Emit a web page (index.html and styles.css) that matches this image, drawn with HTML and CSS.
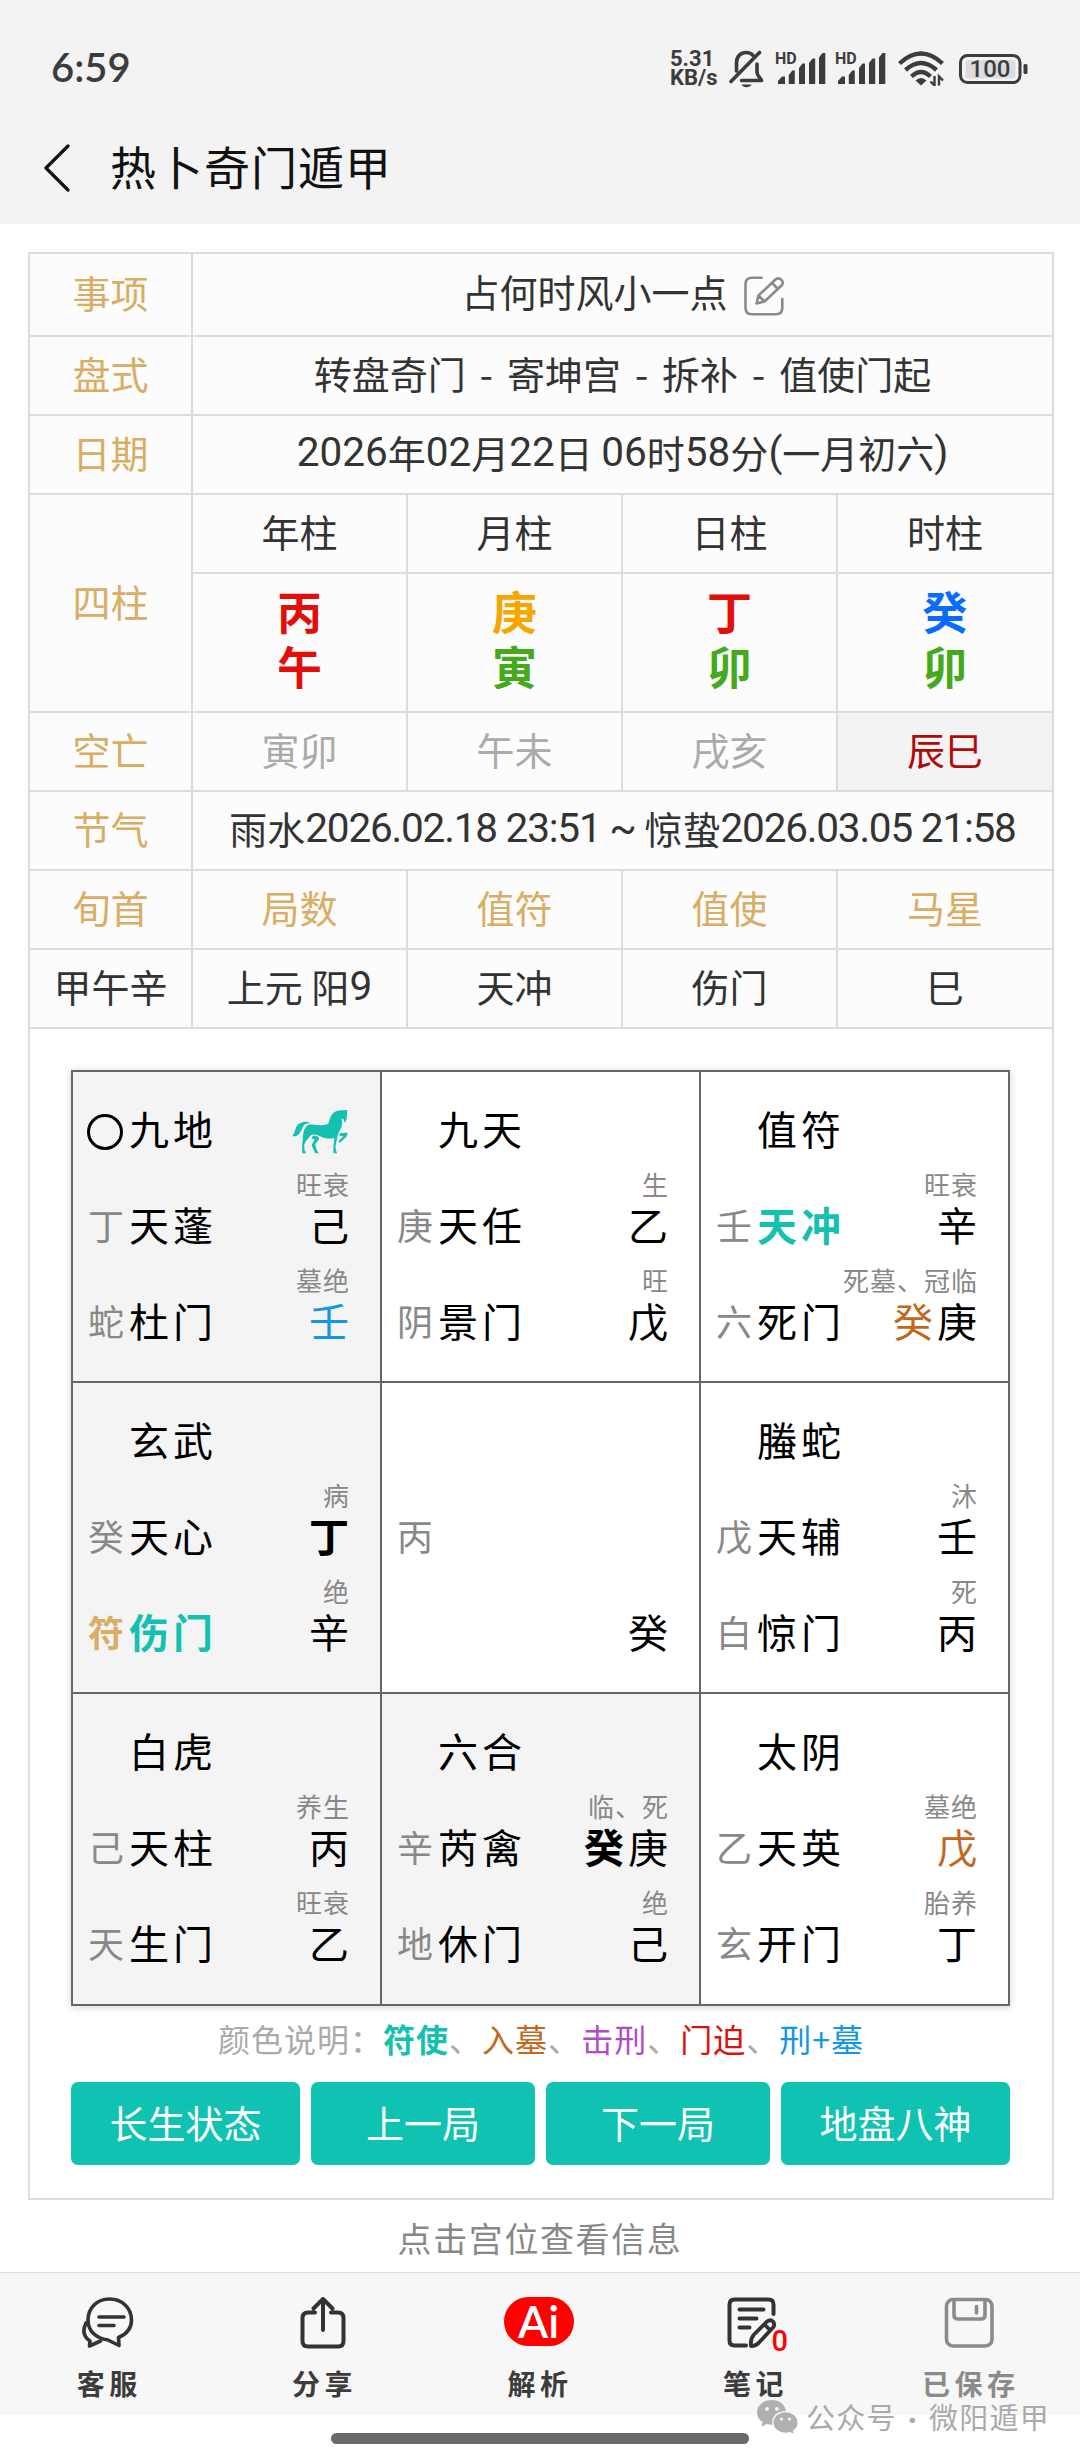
FILE: index.html
```html
<!DOCTYPE html>
<html lang="zh-CN">
<head>
    <meta charset="UTF-8">
    <meta name="viewport" content="width=device-width, initial-scale=1.0">
    <title>热卜奇门遁甲</title>
    <link rel="stylesheet" href="styles.css">
</head>
<body>
    <header class="header">
        <div class="status-bar">
            <span class="clock">6:59</span>
            <div class="status-icons">
                <div class="net-speed"><span>5.31</span><span>KB/s</span></div>
                <svg class="icon-bell" width="35" height="38" viewBox="0 0 35 38" fill="none" stroke="#3c3c3c" stroke-width="3.6" stroke-linecap="round" stroke-linejoin="round"><path d="M7.5 21V13C7.500 6 12 2.500 17 2.500c3 0 5.500 1 7 3M2 31.500L30.500 2.500M28 14v8c0 4 3 5 4.500 8.500H12.500"/><path d="M12.500 34.500h10c-1.500 3.500-8.500 3.500-10 0z" fill="#3c3c3c" stroke="none"/></svg>
                <div class="signal">
                    <span class="hd">HD</span>
                    <svg width="48" height="31" viewBox="0 0 48 31" fill="#3c3c3c"><path d="M0 31v-3l4-4.500h3V31zM10.800 31V22l3.500-4.500h2.500V31zM21 31V15l3.500-4.500h2.500V31zM31 31V10l3.500-4.500h2.700V31zM41 31V4.500L44.500 0H47.300V31z"/></svg>
                </div>
                <div class="signal">
                    <span class="hd">HD</span>
                    <svg width="48" height="31" viewBox="0 0 48 31" fill="#3c3c3c"><path d="M0 31v-3l4-4.500h3V31zM10.800 31V22l3.500-4.500h2.500V31zM21 31V15l3.500-4.500h2.500V31zM31 31V10l3.500-4.500h2.700V31zM41 31V4.500L44.500 0H47.300V31z"/></svg>
                </div>
                <svg class="icon-wifi" width="46" height="35" viewBox="0 0 46 35" fill="none" stroke="#3c3c3c" stroke-width="4.400"><path d="M1.500 12.500Q23-7.500 44.500 12.500M7.500 19Q23 5 38.500 19M13.500 25.500Q23 16.500 32.500 25.500"/><path d="M17.500 29.500q5.500-5 11 0L23 34.500z" fill="#3c3c3c" stroke="none"/><path d="M36.500 25v9.500l-4-4M41 34.500V25.500l4 4" stroke-width="2.400"/></svg>
                <svg class="icon-battery" width="70" height="30" viewBox="0 0 70 30"><rect x="1.500" y="1.500" width="59.500" height="27" rx="7" fill="none" stroke="#3c3c3c" stroke-width="3"/><rect x="6.500" y="6" width="50" height="18.500" rx="3" fill="#dcdcdc"/><rect x="64.500" y="10" width="4" height="10" rx="1.500" fill="#3c3c3c"/><text x="31" y="23.300" text-anchor="middle" class="battery-text">100</text></svg>
            </div>
        </div>
        <div class="title-bar">
            <svg class="back" width="28" height="48" viewBox="0 0 28 48" fill="none" stroke="#111" stroke-width="3.200" stroke-linecap="round" stroke-linejoin="round"><path d="M25 2L3 24l22 22"/></svg>
            <h1>热卜奇门遁甲</h1>
        </div>
    </header>

    <main class="panel">
        <div class="info">
            <div class="cell label">事项</div>
            <div class="cell wide topic">
                <span>占何时风小一点</span>
                <svg width="40" height="40" viewBox="0 0 40 40" fill="none" stroke="#8a8a8a" stroke-width="2.600" stroke-linecap="round" stroke-linejoin="round"><path d="M17.500 1.800H8Q1.500 1.800 1.500 8v24q0 6.300 6.500 6.300h24q6.300 0 6.300-6.300V23"/><path d="M12.500 27.500l2-8L31.500 3.500q3-2.500 6 .5 2.500 3 0 5.500L20.500 25.500zM28 7l6 6M15 20l5 5"/></svg>
            </div>

            <div class="cell label">盘式</div>
            <div class="cell wide mode">转盘奇门 - 寄坤宫 - 拆补 - 值使门起</div>

            <div class="cell label">日期</div>
            <div class="cell wide date"><b>2026</b>年<b>02</b>月<b>22</b>日 <b>06</b>时<b>58</b>分<b>(</b>一月初六<b>)</b></div>

            <div class="cell label pillar-label">四柱</div>
            <div class="cell">年柱</div>
            <div class="cell">月柱</div>
            <div class="cell">日柱</div>
            <div class="cell">时柱</div>
            <div class="cell pillar"><span class="fire">丙</span><span class="fire">午</span></div>
            <div class="cell pillar"><span class="metal">庚</span><span class="wood">寅</span></div>
            <div class="cell pillar"><span class="fire">丁</span><span class="wood">卯</span></div>
            <div class="cell pillar"><span class="water">癸</span><span class="wood">卯</span></div>

            <div class="cell label">空亡</div>
            <div class="cell muted">寅卯</div>
            <div class="cell muted">午未</div>
            <div class="cell muted">戌亥</div>
            <div class="cell void">辰巳</div>

            <div class="cell label">节气</div>
            <div class="cell wide term">雨水<b>2026.02.18 23:51 ~ </b>惊蛰<b>2026.03.05 21:58</b></div>

            <div class="cell label">旬首</div>
            <div class="cell label">局数</div>
            <div class="cell label">值符</div>
            <div class="cell label">值使</div>
            <div class="cell label">马星</div>

            <div class="cell">甲午辛</div>
            <div class="cell">上元 阳<b>9</b></div>
            <div class="cell">天冲</div>
            <div class="cell">伤门</div>
            <div class="cell">巳</div>
        </div>

        <div class="board">
            <section class="palace shade">
                <div class="row">
                    <span class="side"><i class="ring"></i></span><span class="name">九地</span>
                    <svg class="horse" width="56" height="45" viewBox="36 48 166 134" fill="#14c0af"><path d="M36 129C46 119 44 103 55 93C65 85 80 83 90 90C82 91 74 93 70 98C64 108 60 126 47 129Z"/><path d="M76 103C82 92 92 94 102 95C119 96 137 98 144 91C149 75 151 64 164 56C173 51 186 52 201 51C198 57 201 62 199 68C199 77 197 84 192 90C192 82 190 77 184 76C186 91 184 102 180 108C174 118 173 122 171 131L165 160L167 172L170 180H159V160L162 134C150 137 135 138 121 130C108 124 97 121 91 127C85 136 75 143 72 155L73 170L78 180H66V151C70 136 66 130 70 119C71 113 72 108 76 103Z"/><path d="M97 129C105 126 113 129 116 135C117 142 109 145 105 153L109 169L115 180H105L95 158C93 151 103 144 102 137Q98 135 93 139ZM178 120L202 119L198 130L178 149L174 143L189 129L176 128Z"/></svg>
                </div>
                <div class="row"><span class="side">丁</span><span class="name">天蓬</span><div class="stems"><small>旺衰</small><span>己</span></div></div>
                <div class="row"><span class="side">蛇</span><span class="name">杜门</span><div class="stems"><small>墓绝</small><span class="blue">壬</span></div></div>
            </section>
            <section class="palace">
                <div class="row"><span class="side"></span><span class="name">九天</span></div>
                <div class="row"><span class="side">庚</span><span class="name">天任</span><div class="stems"><small>生</small><span>乙</span></div></div>
                <div class="row"><span class="side">阴</span><span class="name">景门</span><div class="stems"><small>旺</small><span>戊</span></div></div>
            </section>
            <section class="palace">
                <div class="row"><span class="side"></span><span class="name">值符</span></div>
                <div class="row"><span class="side">壬</span><span class="name chief">天冲</span><div class="stems"><small>旺衰</small><span>辛</span></div></div>
                <div class="row"><span class="side">六</span><span class="name">死门</span><div class="stems"><small>死墓、冠临</small><span><em class="brown">癸</em>庚</span></div></div>
            </section>
            <section class="palace shade">
                <div class="row"><span class="side"></span><span class="name">玄武</span></div>
                <div class="row"><span class="side">癸</span><span class="name">天心</span><div class="stems"><small>病</small><span class="bold">丁</span></div></div>
                <div class="row"><span class="side mark">符</span><span class="name chief">伤门</span><div class="stems"><small>绝</small><span>辛</span></div></div>
            </section>
            <section class="palace">
                <div class="row"></div>
                <div class="row"><span class="side">丙</span></div>
                <div class="row"><div class="stems"><span>癸</span></div></div>
            </section>
            <section class="palace">
                <div class="row"><span class="side"></span><span class="name">螣蛇</span></div>
                <div class="row"><span class="side">戊</span><span class="name">天辅</span><div class="stems"><small>沐</small><span>壬</span></div></div>
                <div class="row"><span class="side">白</span><span class="name">惊门</span><div class="stems"><small>死</small><span>丙</span></div></div>
            </section>
            <section class="palace shade">
                <div class="row"><span class="side"></span><span class="name">白虎</span></div>
                <div class="row"><span class="side">己</span><span class="name">天柱</span><div class="stems"><small>养生</small><span>丙</span></div></div>
                <div class="row"><span class="side">天</span><span class="name">生门</span><div class="stems"><small>旺衰</small><span>乙</span></div></div>
            </section>
            <section class="palace shade">
                <div class="row"><span class="side"></span><span class="name">六合</span></div>
                <div class="row"><span class="side">辛</span><span class="name">芮禽</span><div class="stems"><small>临、死</small><span><em class="bold">癸</em>庚</span></div></div>
                <div class="row"><span class="side">地</span><span class="name">休门</span><div class="stems"><small>绝</small><span>己</span></div></div>
            </section>
            <section class="palace">
                <div class="row"><span class="side"></span><span class="name">太阴</span></div>
                <div class="row"><span class="side">乙</span><span class="name">天英</span><div class="stems"><small>墓绝</small><span class="brown">戊</span></div></div>
                <div class="row"><span class="side">玄</span><span class="name">开门</span><div class="stems"><small>胎养</small><span>丁</span></div></div>
            </section>
        </div>

        <p class="legend">颜色说明：<span class="chief">符使</span>、<span class="brown">入墓</span>、<span class="purple">击刑</span>、<span class="red">门迫</span>、<span class="blue">刑+墓</span></p>

        <div class="actions">
            <button class="btn">长生状态</button>
            <button class="btn">上一局</button>
            <button class="btn">下一局</button>
            <button class="btn">地盘八神</button>
        </div>
    </main>

    <p class="hint">点击宫位查看信息</p>

    <nav class="tabbar">
        <a class="tab">
            <svg width="52" height="52" viewBox="0 0 52 52" fill="none" stroke="#333" stroke-width="3.600" stroke-linecap="round" stroke-linejoin="round"><path d="M27.500 2C15 2 6 11 6 23c0 11 8 18.500 20 20l11 5.500-.5-8C45 37 49.500 31 49.500 23 49.500 11 40 2 27.500 2z"/><path d="M4 26c-4 8-2 14 4 18l-.5 5 11-5M17 20h25M17 28.500h15"/></svg>
            <span>客服</span>
        </a>
        <a class="tab">
            <svg width="46" height="52" viewBox="0 0 46 52" fill="none" stroke="#333" stroke-width="4" stroke-linecap="round" stroke-linejoin="round"><path d="M15 15.500H8q-5.500 0-5.500 5.500v23q0 5.500 5.500 5.500h30q5.500 0 5.500-5.500V21q0-5.500-5.500-5.500h-7M23 33V3M13.500 11.500L23 2l9.500 9.500"/></svg>
            <span>分享</span>
        </a>
        <a class="tab">
            <div class="ai">Ai</div>
            <span>解析</span>
        </a>
        <a class="tab">
            <div class="note">
                <svg width="50" height="52" viewBox="0 0 50 52" fill="none" stroke="#333" stroke-width="4" stroke-linecap="round" stroke-linejoin="round"><path d="M46.500 17V7.500q0-5-5-5h-34q-5 0-5 5v36q0 5 5 5H19M12.500 12.500h24M12.500 21.500h17M12.500 30.500h10"/><path d="M24 49q-1-7 3-11.500l13-13q3.500-2.500 6 0 2.500 3 0 6L33 44.500Q29.500 49 24 49zM38 28l5 5" stroke-width="3.800"/></svg>
                <b class="badge">0</b>
            </div>
            <span>笔记</span>
        </a>
        <a class="tab saved">
            <svg width="50" height="52" viewBox="0 0 50 52" fill="none" stroke="#8b8b8b" stroke-width="3.600" stroke-linecap="round" stroke-linejoin="round"><rect x="2.500" y="2.500" width="45.500" height="46.500" rx="6.500"/><path d="M10 3v15q0 4 4 4h23q4 0 4-4V3M32.500 9.500v6.500"/></svg>
            <span>已保存</span>
        </a>
    </nav>
    <div class="home-indicator"></div>

    <div class="watermark">
        <svg width="41" height="34" viewBox="0 0 41 34" fill="#b0b0b0"><path d="M15 0C6.500 0 0 5.500 0 12.500c0 4 2 7.300 5.500 9.500L4.500 26.500l5-2.500q2.500.8 6 .8C14 16.500 20 11 29 11 28 4.500 22.500 0 15 0z"/><ellipse cx="28.500" cy="22.500" rx="12" ry="10.200"/><path d="M31 31l5.500 2.500-1-4z"/><g fill="#f7f7f7"><circle cx="10" cy="8.800" r="1.900"/><circle cx="19.800" cy="8.800" r="1.900"/><circle cx="24.500" cy="19" r="1.600"/><circle cx="32.500" cy="19" r="1.600"/></g></svg>
        <span>公众号<b> · </b>微阳遁甲</span>
    </div>
</body>
</html>
```
FILE: styles.css
```css
* {
    box-sizing: border-box;
}
body {
    margin: 0;
    min-height: 2460px;
    position: relative;
    background-color: #fff;
    color: #333;
    font-family: "Noto Sans CJK SC", "Liberation Sans", sans-serif;
}
h1, p {
    margin: 0;
    font-weight: normal;
}
small, em, i {
    font-style: normal;
}

/* 顶部 */
.header {
    height: 224px;
    background-color: #f3f3f3;
}
.status-bar {
    display: flex;
    justify-content: space-between;
    align-items: center;
    height: 112px;
    padding: 25px 51px 0 51px;
    color: #3c3c3c;
}
.clock {
    margin-top: -4px;
    font-family: Lato, sans-serif;
    font-size: 40px;
    font-weight: 600;
}
.status-icons {
    display: flex;
    align-items: center;
}
.net-speed {
    display: flex;
    flex-direction: column;
    width: 59px;
    margin-top: -1px;
    font-family: Roboto, sans-serif;
    font-size: 22px;
    font-weight: 700;
    line-height: 19px;
}
.icon-bell {
    margin-right: 11px;
}
.signal {
    display: flex;
    align-items: flex-end;
    position: relative;
    width: 60px;
    height: 31px;
    padding-left: 3px;
}
.hd {
    position: absolute;
    left: 0;
    top: -1px;
    font-family: Roboto, sans-serif;
    font-size: 16px;
    font-weight: 700;
    line-height: 14px;
}
.icon-wifi {
    margin: 0 15px 0 3px;
}
.battery-text {
    font-family: Roboto, sans-serif;
    font-size: 24px;
    font-weight: 500;
    fill: #3c3c3c;
}
.title-bar {
    display: flex;
    align-items: center;
    height: 111px;
    padding-left: 43px;
    color: #111;
}
.title-bar h1 {
    margin: -5px 0 0 39px;
    font-size: 46px;
    line-height: 60px;
    letter-spacing: 1px;
}

/* 信息表 */
.panel {
    width: 1026px;
    height: 1948px;
    margin: 28px 0 0 28px;
    border: 2px solid #dcdcdc;
}
.info {
    display: grid;
    grid-template-columns: 163px 215px 215px 215px 214px;
    grid-template-rows: 83px 79px 79px 79px 139px 79px 79px 79px 79px;
    background-color: #fcfcfc;
}
.cell {
    display: flex;
    justify-content: center;
    align-items: center;
    padding-bottom: 5px;
    border-right: 2px solid #dcdcdc;
    border-bottom: 2px solid #dcdcdc;
    font-size: 38px;
    line-height: 56px;
    white-space: pre;
}
.cell:nth-child(2),
.cell:nth-child(4),
.cell:nth-child(6),
.cell:nth-child(11),
.cell:nth-child(15),
.cell:nth-child(20),
.cell:nth-child(22),
.cell:nth-child(27),
.cell:nth-child(32) {
    border-right: none;
}
.cell b {
    font-family: Roboto, sans-serif;
    font-size: 40.5px;
    font-weight: 400;
}
.label {
    color: #d9ad63;
}
.wide {
    grid-column: 2 / 6;
}
.topic {
    padding-bottom: 7px;
}
.topic svg {
    margin: 9px 0 0 16px;
}
.mode {
    word-spacing: 5.500px;
}
.term b {
    letter-spacing: -1.200px;
}
.pillar-label {
    grid-row: 4 / 6;
}
.cell.pillar {
    flex-direction: column;
    padding-bottom: 9px;
    font-size: 45px;
    font-weight: 700;
    line-height: 55px;
}
.fire {
    color: #e10e0a;
}
.metal {
    color: #f5a700;
}
.wood {
    color: #44aa1c;
}
.water {
    color: #0a6cff;
}
.muted {
    color: #aaa;
}
.void {
    background-color: #f3f3f3;
    color: #b00b0b;
}

/* 九宫 */
.board {
    display: grid;
    grid-template-columns: 309px 319px 309px;
    grid-template-rows: 311px 311px 312px;
    width: 939px;
    margin: 41px 0 0 41px;
    border: 2px solid #666;
    border-right: none;
    border-bottom: none;
    box-shadow: 0 1px 8px rgba(0, 0, 0, 0.18);
    color: #000;
}
.palace {
    padding: 2px 27px 0 15px;
    border-right: 2px solid #666;
    border-bottom: 2px solid #666;
}
.shade {
    background-color: #f4f4f4;
}
.row {
    display: flex;
    align-items: flex-end;
    height: 96px;
    padding-bottom: 15px;
    line-height: 54px;
    white-space: nowrap;
}
.side {
    flex-shrink: 0;
    width: 41px;
    height: 54px;
    font-size: 36px;
    color: #888;
}
.name {
    flex-shrink: 0;
    font-size: 40px;
    letter-spacing: 4px;
}
.stems {
    display: flex;
    flex-direction: column;
    align-items: flex-end;
    min-width: 0;
    margin-left: auto;
    font-size: 40px;
    letter-spacing: 4px;
}
.stems small {
    margin-right: 3px;
    font-size: 26px;
    line-height: 27px;
    letter-spacing: 1px;
    color: #888;
}
.ring {
    display: block;
    width: 36px;
    height: 36px;
    margin: 13px 0 0 -1px;
    border: 3.500px solid #000;
    border-radius: 50%;
}
.horse {
    margin: 0 5px 1px auto;
}
.bold {
    font-weight: 700;
}
.chief {
    font-weight: 700;
    color: #14c0af;
}
.mark {
    font-weight: 700;
    color: #d9ad63;
}
.blue {
    color: #1296ea;
}
.brown {
    color: #c2681c;
}
.purple {
    color: #b04cca;
}
.red {
    color: #dd120c;
}

.legend {
    margin-top: 8px;
    font-size: 32px;
    line-height: 48px;
    letter-spacing: 1px;
    text-align: center;
    color: #aaa;
}
.actions {
    display: flex;
    gap: 11px;
    margin: 20px 42px 0 41px;
}
.btn {
    flex: 224 1 0;
    height: 83px;
    padding: 0 0 5px;
    border: none;
    border-radius: 7px;
    background-color: #0fc2b2;
    color: #fff;
    font-family: inherit;
    font-size: 38px;
}
.btn:first-child,
.btn:last-child {
    flex-grow: 229;
}
.hint {
    height: 72px;
    padding-top: 4px;
    font-size: 34px;
    line-height: 68px;
    letter-spacing: 1.600px;
    text-align: center;
    color: #888;
}

/* 底部导航 */
.tabbar {
    display: flex;
    height: 143px;
    border-top: 1px solid #dcdcdc;
    background-color: #f7f7f7;
}
.tab {
    flex: 1;
    display: flex;
    flex-direction: column;
    align-items: center;
    padding-top: 24px;
    font-size: 28px;
    font-weight: 600;
    color: #3c3c3c;
}
.tab span {
    margin: 11px 0 0 3px;
    line-height: 46px;
    letter-spacing: 4.500px;
}
.tab svg {
    display: block;
}
.ai {
    width: 70px;
    height: 49px;
    margin-bottom: 3px;
    border-radius: 25px;
    background-color: #fe0000;
    color: #fff;
    font-family: Lato, sans-serif;
    font-size: 44px;
    line-height: 49px;
    text-align: center;
}
.note {
    position: relative;
    margin-right: 3px;
}
.badge {
    position: absolute;
    left: 44px;
    top: 30px;
    font-family: Roboto, sans-serif;
    font-size: 29px;
    font-weight: 500;
    line-height: 28px;
    color: #f00;
}
.saved {
    padding-right: 3px;
    color: #8b8b8b;
}
.home-indicator {
    width: 418px;
    height: 11px;
    margin: 18px auto 0;
    border-radius: 6px;
    background-color: #6a6a6a;
}
.watermark {
    position: absolute;
    left: 757px;
    top: 2395px;
    display: flex;
    align-items: center;
    gap: 8px;
    font-size: 29px;
    line-height: 42px;
    letter-spacing: 1.300px;
    white-space: nowrap;
    color: #aaa;
}
.watermark b {
    font-family: Lato, sans-serif;
    font-weight: 700;
    word-spacing: 3px;
}
```
